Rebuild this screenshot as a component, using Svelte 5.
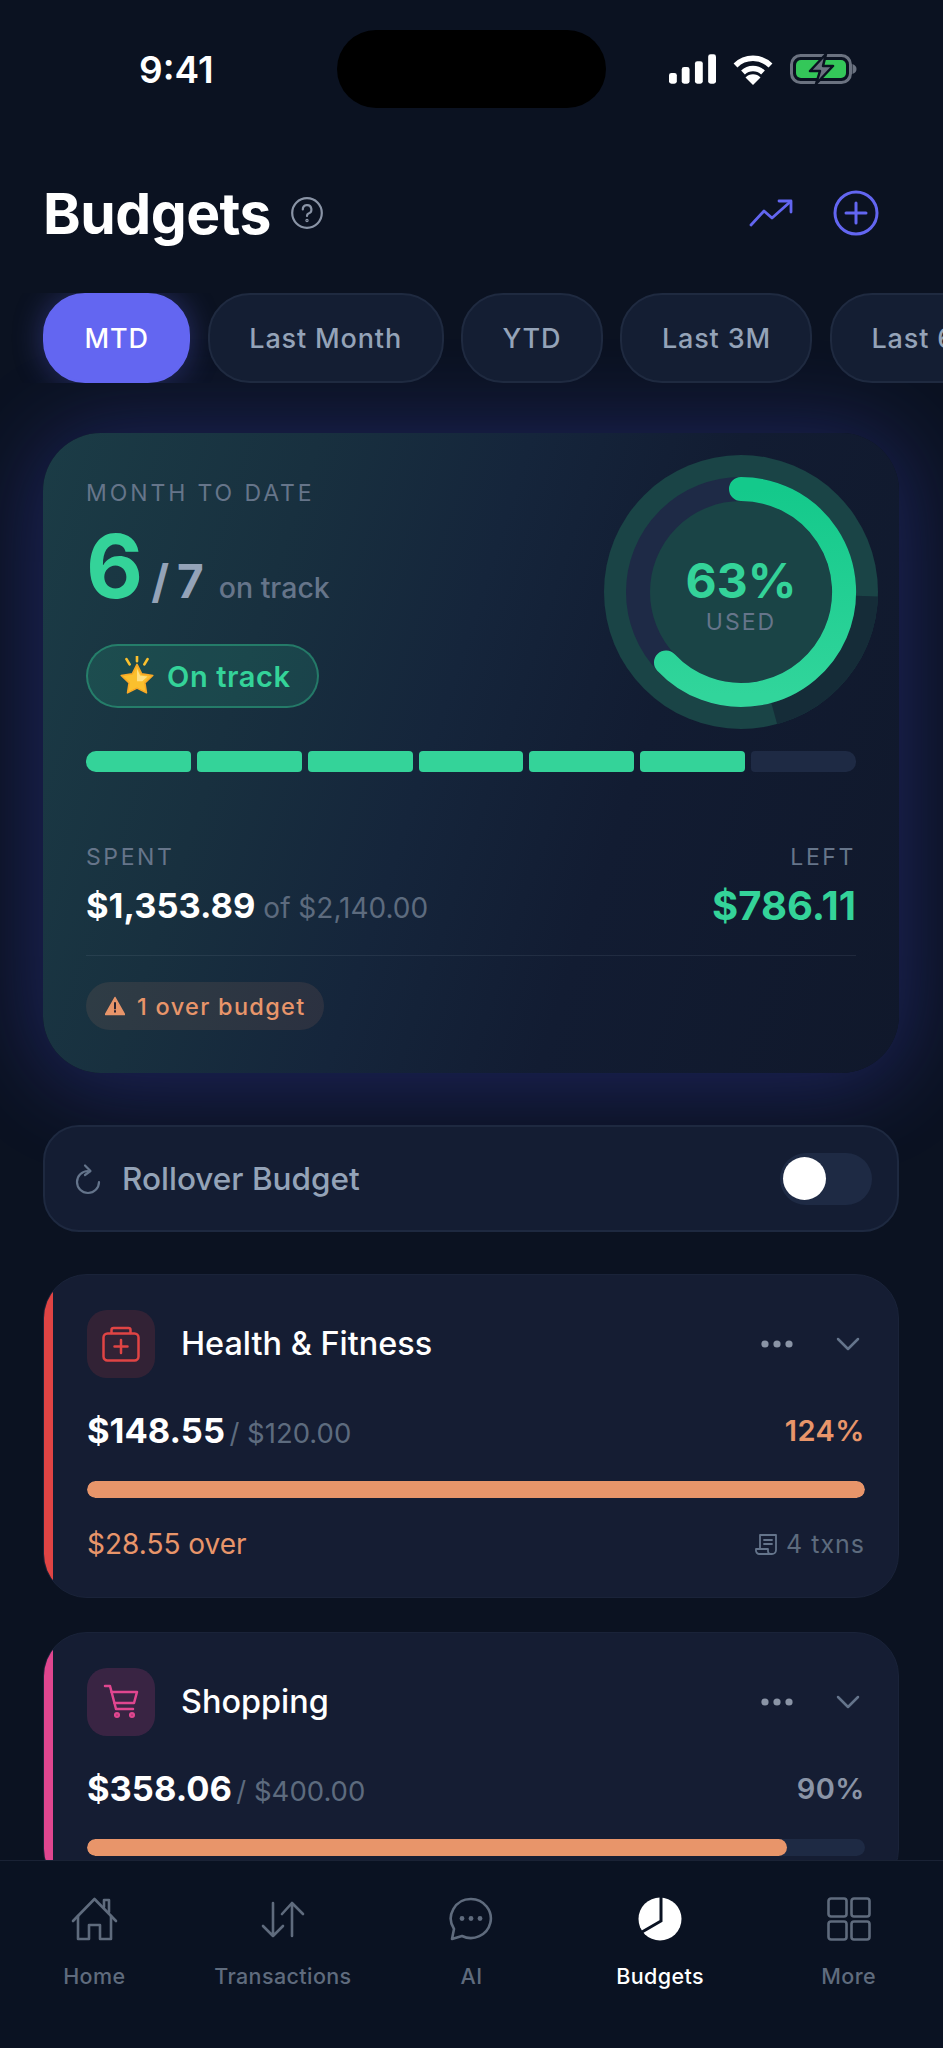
<script lang="ts">
	const ranges = ['MTD', 'Last Month', 'YTD', 'Last 3M', 'Last 6M'];
	const segments = [1, 1, 1, 1, 1, 1, 0];

	const categories = [
		{ name: 'Health & Fitness', icon: 'health', color: '#e04444', tint: 'rgba(224, 68, 68, 0.14)', spent: '$148.55', budget: '$120.00', pct: 124, over: '$28.55 over', txns: '4 txns' },
		{ name: 'Shopping', icon: 'cart', color: '#e0468f', tint: 'rgba(224, 70, 143, 0.18)', spent: '$358.06', budget: '$400.00', pct: 90, over: '', txns: '' }
	];

	const tabs = ['Home', 'Transactions', 'AI', 'Budgets', 'More'];
</script>

<div class="screen">
	<div class="status">
		<span class="time">9:41</span>
		<div class="island"></div>
		<div class="status-icons">
			<svg width="47" height="30" viewBox="0 0 48 30" fill="#fff">
				<rect x="0" y="19" width="8" height="11" rx="2.5" />
				<rect x="13" y="13" width="8" height="17" rx="2.5" />
				<rect x="26.500" y="7" width="8" height="23" rx="2.500" />
				<rect x="40" y="0" width="8" height="30" rx="2.500" />
			</svg>
			<svg width="42" height="31" viewBox="0 0 41 31">
				<path d="M3 11.500 A25 25 0 0 1 38 11.500" fill="none" stroke="#fff" stroke-width="5.500" />
				<path d="M10.500 18.500 A14.500 14.500 0 0 1 30.500 18.500" fill="none" stroke="#fff" stroke-width="5.500" />
				<path d="M20.500 31 L13 23.500 A10.500 10.500 0 0 1 28 23.500Z" fill="#fff" />
			</svg>
			<svg width="67" height="32" viewBox="0 0 67 32">
				<rect x="1.500" y="2.500" width="59" height="27" rx="9" fill="#0b1221" stroke="#6b7280" stroke-width="3" />
				<rect x="6" y="7" width="50" height="18" rx="5" fill="#34c759" />
				<path d="M62.500 11 C65.500 12 66.500 14 66.500 16 C66.500 18 65.500 20 62.500 21Z" fill="#6b7280" />
				<path d="M36 1 L20 18 H30 L26 31 L43 13 H33Z" fill="#6b7280" stroke="#0b1221" stroke-width="2.500" stroke-linejoin="round" />
			</svg>
		</div>
	</div>

	<header class="header">
		<h1>Budgets</h1>
		<svg class="help" width="32" height="32" viewBox="0 0 32 32" fill="none" stroke="#8a94a6" stroke-width="2.200" stroke-linecap="round">
			<circle cx="16" cy="16" r="14.800" />
			<path d="M11.800 12.500 A4.300 4.300 0 1 1 17.500 16.500 C16.400 17 16 17.800 16 19" />
			<circle cx="16" cy="23.500" r="0.600" />
		</svg>
		<div class="header-actions">
			<svg width="44" height="28" viewBox="0 0 44 28" fill="none" stroke="#6366f1" stroke-width="2.800" stroke-linecap="round" stroke-linejoin="round">
				<path d="M2 26 L15 12 L23 19 L41 3" />
				<path d="M30 2 H42 V13" />
			</svg>
			<svg width="46" height="46" viewBox="0 0 46 46" fill="none" stroke="#6366f1" stroke-width="3" stroke-linecap="round">
				<circle cx="23" cy="23" r="21" />
				<path d="M23 13 V33 M13 23 H33" />
			</svg>
		</div>
	</header>

	<div class="chips">
		{#each ranges as range, i}
			<div class="chip" class:active={i === 0}>{range}</div>
		{/each}
	</div>

	<section class="hero">
		<div class="hero-top">
			<div class="hero-left">
				<div class="overline">MONTH TO DATE</div>
				<div class="score">
					<span class="score-num">6</span>
					<span class="score-of">/ 7</span>
					<span class="score-label">on track</span>
				</div>
				<div class="track-pill">
					<svg width="40" height="40" viewBox="0 0 38 38">
						<path d="M19 8 L23.500 17 L34 18.500 L26.500 25.500 L28 35 L19 30.500 L10 35 L11.500 25.500 L4 18.500 L14.500 17Z" fill="#fbc02d" stroke="#f9a825" stroke-width="1.500" stroke-linejoin="round" />
						<path d="M19 12 L22 18.500 L29 19.500 L24 24 L19 24Z" fill="#ffe082" />
						<path d="M19 0 V5 M9 3 L12 8 M29 3 L26 8" stroke="#fbc02d" stroke-width="2.500" stroke-linecap="round" />
					</svg>
					<span>On track</span>
				</div>
			</div>
			<div class="ring">
				<svg width="274" height="274" viewBox="0 0 274 274">
					<defs>
						<linearGradient id="arc" x1="0" y1="0" x2="0" y2="1">
							<stop offset="0" stop-color="#14c98b" />
							<stop offset="1" stop-color="#31d59b" />
						</linearGradient>
					</defs>
					<circle cx="137" cy="137" r="137" fill="#1a4446" />
					<circle cx="137" cy="137" r="126" fill="none" stroke="#152c38" stroke-width="22" stroke-dasharray="0 202 160 1000" transform="rotate(-90 137 137)" />
					<circle cx="137" cy="137" r="103" fill="none" stroke="#1e2a46" stroke-width="24" />
					<path d="M137 34 A103 103 0 1 1 62 207.500" fill="none" stroke="url(#arc)" stroke-width="24" stroke-linecap="round" />
				</svg>
				<div class="ring-text">
					<div class="ring-pct">63%</div>
					<div class="ring-used">USED</div>
				</div>
			</div>
		</div>

		<div class="segments">
			{#each segments as on}
				<div class="segment" class:on={on === 1}></div>
			{/each}
		</div>

		<div class="stats">
			<div>
				<div class="overline small">SPENT</div>
				<div class="stat-value"><strong>$1,353.89</strong> <span>of $2,140.00</span></div>
			</div>
			<div class="stat-right">
				<div class="overline small">LEFT</div>
				<div class="left-value">$786.11</div>
			</div>
		</div>

		<div class="over-row">
			<div class="over-pill">
				<svg width="20" height="20" viewBox="0 0 20 20">
					<path d="M10 1.500 L19.500 18.500 H0.500Z" fill="#e8956a" stroke="#e8956a" stroke-width="1.500" stroke-linejoin="round" />
					<path d="M10 7 V12.500 M10 15 V15.800" stroke="#2a2230" stroke-width="2" stroke-linecap="round" />
				</svg>
				<span>1 over budget</span>
			</div>
		</div>
	</section>

	<section class="rollover">
		<svg width="26" height="32" viewBox="0 0 26 32" fill="none" stroke="#64748b" stroke-width="2.200" stroke-linecap="round" stroke-linejoin="round">
			<path d="M24 19 A11 11 0 1 1 13 8" />
			<path d="M10 2.500 L15.500 8 L10 12" />
		</svg>
		<span class="rollover-label">Rollover Budget</span>
		<div class="toggle"><div class="knob"></div></div>
	</section>

	<div class="cards">
		{#each categories as cat}
			<section class="card">
				<div class="stripe" style:background={cat.color}></div>
				<div class="card-head">
					<div class="cat-icon" style:background={cat.tint} style:color={cat.color}>
						{#if cat.icon === 'health'}
							<svg width="38" height="38" viewBox="0 0 38 38" fill="none" stroke="currentColor" stroke-width="2.500" stroke-linecap="round" stroke-linejoin="round">
								<rect x="1.500" y="8.500" width="35" height="27" rx="4" />
								<path d="M9.500 8 V5 Q9.500 3 11.500 3 H26.500 Q28.500 3 28.500 5 V8" />
								<path d="M19 15 V28 M12.500 21.500 H25.500" />
							</svg>
						{:else}
							<svg width="38" height="38" viewBox="0 0 38 38" fill="none" stroke="currentColor" stroke-width="2.500" stroke-linecap="round" stroke-linejoin="round">
								<path d="M3 3 H8 L14 26 H31" />
								<path d="M9.500 9 H35 L32 20 H12.500" />
								<circle cx="15" cy="32" r="1.800" />
								<circle cx="30" cy="32" r="1.800" />
							</svg>
						{/if}
					</div>
					<span class="cat-name">{cat.name}</span>
					<svg class="dots" width="32" height="8" viewBox="0 0 32 8" fill="#8a94a6">
						<circle cx="4" cy="4" r="3.600" />
						<circle cx="16" cy="4" r="3.600" />
						<circle cx="28" cy="4" r="3.600" />
					</svg>
					<svg class="chevron" width="24" height="14" viewBox="0 0 24 14" fill="none" stroke="#64748b" stroke-width="2.500" stroke-linecap="round" stroke-linejoin="round">
						<path d="M2 2 L12 12 L22 2" />
					</svg>
				</div>
				<div class="amount-row">
					<div><strong class="amount">{cat.spent}</strong> <span class="of">/ {cat.budget}</span></div>
					<span class="pct" class:warn={cat.pct > 100}>{cat.pct}%</span>
				</div>
				<div class="bar"><div class="bar-fill" style:width="{Math.min(cat.pct, 100)}%"></div></div>
				{#if cat.over}
					<div class="card-foot">
						<span class="over">{cat.over}</span>
						<span class="txns">
							<svg width="24" height="22" viewBox="0 0 24 22" fill="none" stroke="#64748b" stroke-width="1.800" stroke-linejoin="round" stroke-linecap="round">
								<path d="M6 16 V2 H22 V17 A4 4 0 0 1 18 21 H5 A3.500 3.500 0 0 1 2 17 V16 H14 V18 A3 3 0 0 0 18 21" />
								<path d="M10 7 H18 M10 11 H18" />
							</svg>
							{cat.txns}
						</span>
					</div>
				{/if}
			</section>
		{/each}
	</div>

	<nav class="tabbar">
		{#each tabs as tab}
			<div class="tab" class:current={tab === 'Budgets'}>
				<div class="tab-icon">
					{#if tab === 'Home'}
						<svg width="47" height="44" viewBox="0 0 47 44" fill="none" stroke="#5f6b7d" stroke-width="2.600" stroke-linejoin="round" stroke-linecap="round">
							<path d="M2 24 L23.500 2 L45 24" />
							<path d="M7 19 V42 H18 V28 H29 V42 H40 V19" />
							<path d="M33 10 V3 H38 V15" />
						</svg>
					{:else if tab === 'Transactions'}
						<svg width="44" height="44" viewBox="0 0 44 44" fill="none" stroke="#5f6b7d" stroke-width="2.600" stroke-linejoin="round" stroke-linecap="round">
							<path d="M12 6 V39 M2 29 L12 39 L22 29" />
							<path d="M31 39 V6 M21 17 L31 6 L42 17" />
						</svg>
					{:else if tab === 'AI'}
						<svg width="44" height="44" viewBox="0 0 44 44" fill="none" stroke="#5f6b7d" stroke-width="2.600" stroke-linejoin="round">
							<path d="M22 2 A20 19.500 0 1 1 13 39 L3 42 L5 32 A20 19.500 0 0 1 22 2Z" />
							<g fill="#5f6b7d" stroke="none">
								<circle cx="13" cy="21.500" r="2.400" />
								<circle cx="22" cy="21.500" r="2.400" />
								<circle cx="31" cy="21.500" r="2.400" />
							</g>
						</svg>
					{:else if tab === 'Budgets'}
						<svg width="44" height="44" viewBox="0 0 44 44">
							<circle cx="22" cy="22" r="21.500" fill="#fff" />
							<path d="M23 0 V24 L4 35" fill="none" stroke="#0a1222" stroke-width="3" />
						</svg>
					{:else}
						<svg width="44" height="44" viewBox="0 0 44 44" fill="none" stroke="#5f6b7d" stroke-width="2.600">
							<rect x="1.500" y="1.500" width="18" height="18" rx="2.500" />
							<rect x="24.500" y="1.500" width="18" height="18" rx="2.500" />
							<rect x="1.500" y="24.500" width="18" height="18" rx="2.500" />
							<rect x="24.500" y="24.500" width="18" height="18" rx="2.500" />
						</svg>
					{/if}
				</div>
				<span class="tab-label">{tab}</span>
			</div>
		{/each}
	</nav>
</div>

<style>
	:global(body) {
		background: #0b1221;
	}

	.screen {
		position: relative;
		width: 943px;
		height: 2048px;
		overflow: hidden;
		background: #0b1221;
		color: #fff;
		font-family: Inter, 'Liberation Sans', sans-serif;
	}

	.status {
		display: flex;
		align-items: center;
		height: 78px;
		margin-top: 30px;
		padding: 0 86px 0 139px;
	}

	.time {
		width: 198px;
		font-size: 37px;
		font-weight: 600;
	}

	.island {
		width: 269px;
		height: 78px;
		border-radius: 39px;
		background: #000;
	}

	.status-icons {
		display: flex;
		align-items: center;
		gap: 16px;
		margin-left: auto;
	}

	.header {
		display: flex;
		align-items: center;
		height: 60px;
		margin-top: 75px;
		padding: 0 43px;
	}

	h1 {
		margin: 0;
		font-size: 57px;
		font-weight: 700;
		letter-spacing: -0.5px;
	}

	.help {
		margin-left: 20px;
	}

	.header-actions {
		display: flex;
		align-items: center;
		gap: 40px;
		margin-left: auto;
		margin-right: 21px;
	}

	.chips {
		display: flex;
		gap: 17.500px;
		height: 90px;
		margin-top: 50px;
		padding-left: 43px;
		overflow: hidden;
	}

	.chip {
		display: flex;
		align-items: center;
		flex-shrink: 0;
		height: 90px;
		box-sizing: border-box;
		padding: 0 39.500px;
		border: 2px solid #1f2a40;
		border-radius: 42px;
		background: #141e33;
		color: #94a3b8;
		font-size: 27px;
		font-weight: 500;
		letter-spacing: 0.850px;
	}

	.chip.active {
		border-color: #6366f1;
		background: #6366f1;
		color: #fff;
		box-shadow: 0 0 30px rgba(99, 102, 241, 0.35);
	}

	.hero {
		box-sizing: border-box;
		width: 856px;
		height: 640px;
		margin: 50px 0 0 43px;
		padding: 22px 43px 0;
		border-radius: 58px;
		background: linear-gradient(108deg, #1b3c46 0%, #18303f 26%, #15253b 46%, #121c32 66%, #10182b 100%);
		box-shadow: 0 6px 90px 6px rgba(72, 78, 225, 0.32);
	}

	.hero-top {
		display: flex;
		justify-content: space-between;
		margin-right: -22px;
	}

	.hero-left {
		padding-top: 25px;
	}

	.overline {
		color: #66758a;
		font-size: 23px;
		line-height: 26px;
		letter-spacing: 2.900px;
	}

	.score {
		display: flex;
		align-items: baseline;
		height: 84px;
		margin-top: 18px;
		line-height: 84px;
	}

	.score-num {
		color: #34d399;
		font-size: 88px;
		font-weight: 700;
	}

	.score-of {
		margin-left: 8px;
		color: #94a3b8;
		font-size: 46px;
		font-weight: 700;
		word-spacing: -3px;
	}

	.score-label {
		margin-left: 15px;
		color: #66758a;
		font-size: 28.500px;
		font-weight: 500;
	}

	.track-pill {
		display: inline-flex;
		align-items: center;
		gap: 10px;
		box-sizing: border-box;
		width: 233px;
		height: 64px;
		margin-top: 36px;
		padding-left: 29px;
		border: 2px solid rgba(52, 211, 153, 0.38);
		border-radius: 32px;
		background: rgba(52, 211, 153, 0.14);
		color: #34d399;
		font-size: 29px;
		font-weight: 600;
		letter-spacing: 0.600px;
	}

	.ring {
		position: relative;
		flex-shrink: 0;
		width: 274px;
		height: 274px;
	}

	.ring svg {
		display: block;
	}

	.ring-text {
		position: absolute;
		inset: 0;
		display: flex;
		flex-direction: column;
		align-items: center;
		justify-content: center;
		padding-top: 4px;
		box-sizing: border-box;
	}

	.ring-pct {
		color: #34d399;
		font-size: 48px;
		font-weight: 700;
		line-height: 56px;
	}

	.ring-used {
		margin-top: -1px;
		color: #66758a;
		font-size: 23px;
		line-height: 28px;
		letter-spacing: 2px;
	}

	.segments {
		display: flex;
		gap: 6px;
		margin-top: 22px;
	}

	.segment {
		flex: 1;
		height: 21px;
		border-radius: 4px;
		background: #1e2a44;
	}

	.segment:first-child {
		border-radius: 10px 4px 4px 10px;
	}

	.segment:last-child {
		border-radius: 4px 10px 10px 4px;
	}

	.segment.on {
		background: #34d399;
	}

	.stats {
		display: flex;
		justify-content: space-between;
		margin-top: 72px;
		padding-bottom: 27px;
		border-bottom: 1px solid rgba(148, 163, 184, 0.12);
	}

	.overline.small {
		letter-spacing: 2.600px;
	}

	.stat-value {
		margin-top: 16px;
		color: #5d6b7e;
		font-size: 28px;
		line-height: 40px;
	}

	.stat-value strong {
		color: #fff;
		font-size: 34.500px;
		font-weight: 700;
	}

	.stat-right {
		text-align: right;
	}

	.left-value {
		margin-top: 16px;
		color: #34d399;
		font-size: 40px;
		font-weight: 700;
		line-height: 40px;
	}

	.over-row {
		margin-top: 26px;
	}

	.over-pill {
		display: inline-flex;
		align-items: center;
		gap: 12px;
		height: 48px;
		padding: 0 19px;
		border-radius: 24px;
		background: rgba(232, 149, 106, 0.11);
		color: #e8956a;
		font-size: 23.500px;
		font-weight: 500;
		letter-spacing: 1.300px;
	}

	.rollover {
		position: relative;
		display: flex;
		align-items: center;
		box-sizing: border-box;
		width: 856px;
		height: 107px;
		margin: 52px 0 0 43px;
		padding: 0 25px 0 30px;
		border: 2px solid #1e2940;
		border-radius: 36px;
		background: #141d33;
	}

	.rollover-label {
		margin-left: 21px;
		color: #94a3b8;
		font-size: 31.500px;
		font-weight: 500;
	}

	.toggle {
		display: flex;
		align-items: center;
		width: 92px;
		height: 52px;
		margin-left: auto;
		padding-left: 3px;
		box-sizing: border-box;
		border-radius: 26px;
		background: #1e2a44;
	}

	.knob {
		width: 43px;
		height: 43px;
		border-radius: 50%;
		background: #fff;
	}

	.cards {
		display: flex;
		flex-direction: column;
		gap: 34px;
		margin: 42px 0 0 43px;
		width: 856px;
	}

	.card {
		position: relative;
		box-sizing: border-box;
		padding: 35px 33px 36px 43px;
		border: 1px solid #1a2339;
		border-radius: 44px;
		background: #151d33;
		overflow: hidden;
	}

	.stripe {
		position: absolute;
		top: 0;
		bottom: 0;
		left: 0;
		width: 9px;
	}

	.card-head {
		display: flex;
		align-items: center;
	}

	.cat-icon {
		display: flex;
		align-items: center;
		justify-content: center;
		width: 68px;
		height: 68px;
		border-radius: 20px;
	}

	.cat-name {
		margin-left: 26px;
		margin-top: -2px;
		font-size: 32.400px;
		font-weight: 500;
	}

	.dots {
		margin-left: auto;
	}

	.chevron {
		margin: 0 5px 0 43px;
	}

	.amount-row {
		display: flex;
		align-items: center;
		justify-content: space-between;
		height: 40px;
		margin-top: 32px;
	}

	.amount {
		font-size: 34.500px;
		font-weight: 700;
	}

	.of {
		color: #5d6b7e;
		font-size: 27.500px;
	}

	.pct {
		color: #8a94a6;
		font-size: 29px;
		font-weight: 600;
		letter-spacing: 0.500px;
	}

	.pct.warn {
		color: #e8956a;
	}

	.bar {
		height: 17px;
		margin-top: 31px;
		border-radius: 9px;
		background: #1e2a44;
		overflow: hidden;
	}

	.bar-fill {
		height: 100%;
		border-radius: 9px;
		background: #e8956a;
	}

	.card-foot {
		display: flex;
		align-items: center;
		justify-content: space-between;
		height: 34px;
		margin-top: 29px;
	}

	.over {
		color: #e8956a;
		font-size: 28px;
	}

	.txns {
		display: flex;
		align-items: center;
		gap: 8px;
		color: #5d6b7e;
		font-size: 25px;
		letter-spacing: 1px;
	}

	.tabbar {
		position: absolute;
		left: 0;
		right: 0;
		bottom: 0;
		display: grid;
		grid-template-columns: repeat(5, 1fr);
		height: 188px;
		box-sizing: border-box;
		padding-top: 36px;
		border-top: 1px solid #1a2235;
		background: #0a1222;
	}

	.tab {
		display: flex;
		flex-direction: column;
		align-items: center;
	}

	.tab-icon {
		display: flex;
		align-items: center;
		justify-content: center;
		height: 44px;
	}

	.tab-label {
		margin-top: 21px;
		color: #5f6b7d;
		font-size: 21.500px;
		font-weight: 500;
		line-height: 28px;
		letter-spacing: 0.400px;
	}

	.tab.current .tab-label {
		color: #fff;
	}
</style>
